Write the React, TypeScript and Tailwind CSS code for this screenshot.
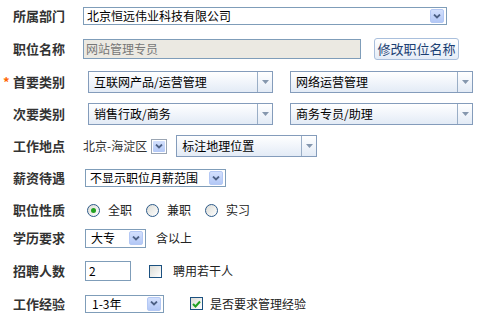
import React from 'react';

const Chevron = () => (
  <svg width="8" height="5" viewBox="0 0 8 5">
    <path d="M1 0.5 L4 3.5 L7 0.5" fill="none" stroke="#4d6185" strokeWidth="1.8" />
  </svg>
);

const XpArrow = () => (
  <div className="flex h-[14px] w-[14px] items-center justify-center rounded-[2px] border border-[#b4c8f4] bg-gradient-to-b from-[#d3e0fd] to-[#b3c8f6]">
    <Chevron />
  </div>
);

const XpSelect = ({ value, className }: { value: string; className: string }) => (
  <div className={`flex items-center justify-between border border-[#7f9db9] bg-white pr-[2px] text-[12px] text-black ${className}`}>
    <span className="leading-none">{value}</span>
    <XpArrow />
  </div>
);

const FancySelect = ({ value, className }: { value: string; className: string }) => (
  <div className={`flex h-[22px] items-stretch border border-[#849cbb] bg-gradient-to-b from-white to-[#e3ebf6] text-[12px] text-black ${className}`}>
    <span className="flex flex-1 items-center pl-[5px] leading-none">{value}</span>
    <div className="flex w-[15px] items-center justify-center border-l border-[#9aaec6]">
      <svg width="7" height="4" viewBox="0 0 7 4">
        <path d="M0 0 H7 L3.5 4 Z" fill="#8597ae" />
      </svg>
    </div>
  </div>
);

const Radio = ({ checked }: { checked?: boolean }) => (
  <span className="flex h-[13px] w-[13px] items-center justify-center rounded-full border border-[#2c5a89] bg-gradient-to-br from-[#dcdcd6] to-white">
    {checked && <span className="h-[5px] w-[5px] rounded-full bg-[#21a121]" />}
  </span>
);

const Checkbox = ({ checked }: { checked?: boolean }) => (
  <span className="flex h-[13px] w-[13px] items-center justify-center border border-[#1c5180] bg-gradient-to-br from-[#dcdcd6] to-white">
    {checked && (
      <svg width="9" height="8" viewBox="0 0 9 8">
        <path d="M1 4 L3.5 6.5 L8 1.5" fill="none" stroke="#21a121" strokeWidth="2" />
      </svg>
    )}
  </span>
);

const Label = ({ text, required }: { text: string; required?: boolean }) => (
  <div className="flex w-[83px] shrink-0 items-center pl-[3px]">
    <span className="w-[10px] text-[13px] font-bold text-[#ff6600]">{required ? '*' : ''}</span>
    <span className="text-[13px] font-bold text-[#333]">{text}</span>
  </div>
);

export default function App() {
  return (
    <div className="h-[323px] w-[480px] bg-white font-['Noto_Sans_CJK_SC',sans-serif] text-[12px] text-[#222]">
      <div className="flex h-[32px] items-center">
        <Label text="所属部门" />
        <XpSelect value="北京恒远伟业科技有限公司" className="h-[18px] w-[364px] pl-[3px]" />
      </div>

      <div className="flex h-[33px] items-center">
        <Label text="职位名称" />
        <div className="flex h-[20px] w-[278px] items-center border border-[#7f9db9] bg-[#ebe9e2] pl-[2px] text-[12px] leading-none text-[#777]">
          网站管理专员
        </div>
        <button className="ml-[13px] h-[22px] w-[85px] rounded-[3px] border border-[#a9bfdc] bg-gradient-to-b from-white to-[#e4ecf7] text-[13px] leading-none text-[#1b3f73]">
          修改职位名称
        </button>
      </div>

      <div className="flex h-[33px] items-center">
        <Label text="首要类别" required />
        <FancySelect value="互联网产品/运营管理" className="ml-[5px] w-[185px]" />
        <FancySelect value="网络运营管理" className="ml-[17px] w-[183px]" />
      </div>

      <div className="flex h-[32px] items-center">
        <Label text="次要类别" />
        <FancySelect value="销售行政/商务" className="ml-[5px] w-[185px]" />
        <FancySelect value="商务专员/助理" className="ml-[17px] w-[183px]" />
      </div>

      <div className="flex h-[32px] items-center">
        <Label text="工作地点" />
        <span className="leading-none text-[#333]">北京-海淀区</span>
        <div className="ml-[4px] flex h-[15px] w-[16px] items-center justify-center border border-[#9aa5b3] bg-white">
          <div className="flex h-[11px] w-[12px] items-center justify-center rounded-[1px] bg-gradient-to-b from-[#d3e0fd] to-[#b3c8f6]">
            <Chevron />
          </div>
        </div>
        <FancySelect value="标注地理位置" className="ml-[9px] w-[141px]" />
      </div>

      <div className="flex h-[32px] items-center">
        <Label text="薪资待遇" />
        <XpSelect value="不显示职位月薪范围" className="ml-[2px] h-[18px] w-[141px] pl-[4px]" />
      </div>

      <div className="flex h-[32px] items-center">
        <Label text="职位性质" />
        <div className="ml-[4px] flex items-center leading-none text-[#222]">
          <Radio checked />
          <span className="ml-[8px]">全职</span>
          <span className="ml-[14px]"><Radio /></span>
          <span className="ml-[8px]">兼职</span>
          <span className="ml-[14px]"><Radio /></span>
          <span className="ml-[8px]">实习</span>
        </div>
      </div>

      <div className="flex h-[24px] items-center">
        <Label text="学历要求" />
        <XpSelect value="大专" className="ml-[2px] h-[19px] w-[61px] pl-[5px]" />
        <span className="ml-[10px] leading-none text-[#222]">含以上</span>
      </div>

      <div className="flex h-[42px] items-center">
        <Label text="招聘人数" />
        <div className="ml-[2px] flex h-[20px] w-[46px] items-center border border-[#7f9db9] bg-white pl-[3px] leading-none text-black">
          2
        </div>
        <span className="ml-[18px]"><Checkbox /></span>
        <span className="ml-[11px] leading-none text-[#222]">聘用若干人</span>
      </div>

      <div className="flex h-[23px] items-center">
        <Label text="工作经验" />
        <XpSelect value="1-3年" className="ml-[2px] h-[18px] w-[79px] pl-[6px]" />
        <span className="ml-[26px]"><Checkbox checked /></span>
        <span className="ml-[7px] leading-none text-[#222]">是否要求管理经验</span>
      </div>
    </div>
  );
}
